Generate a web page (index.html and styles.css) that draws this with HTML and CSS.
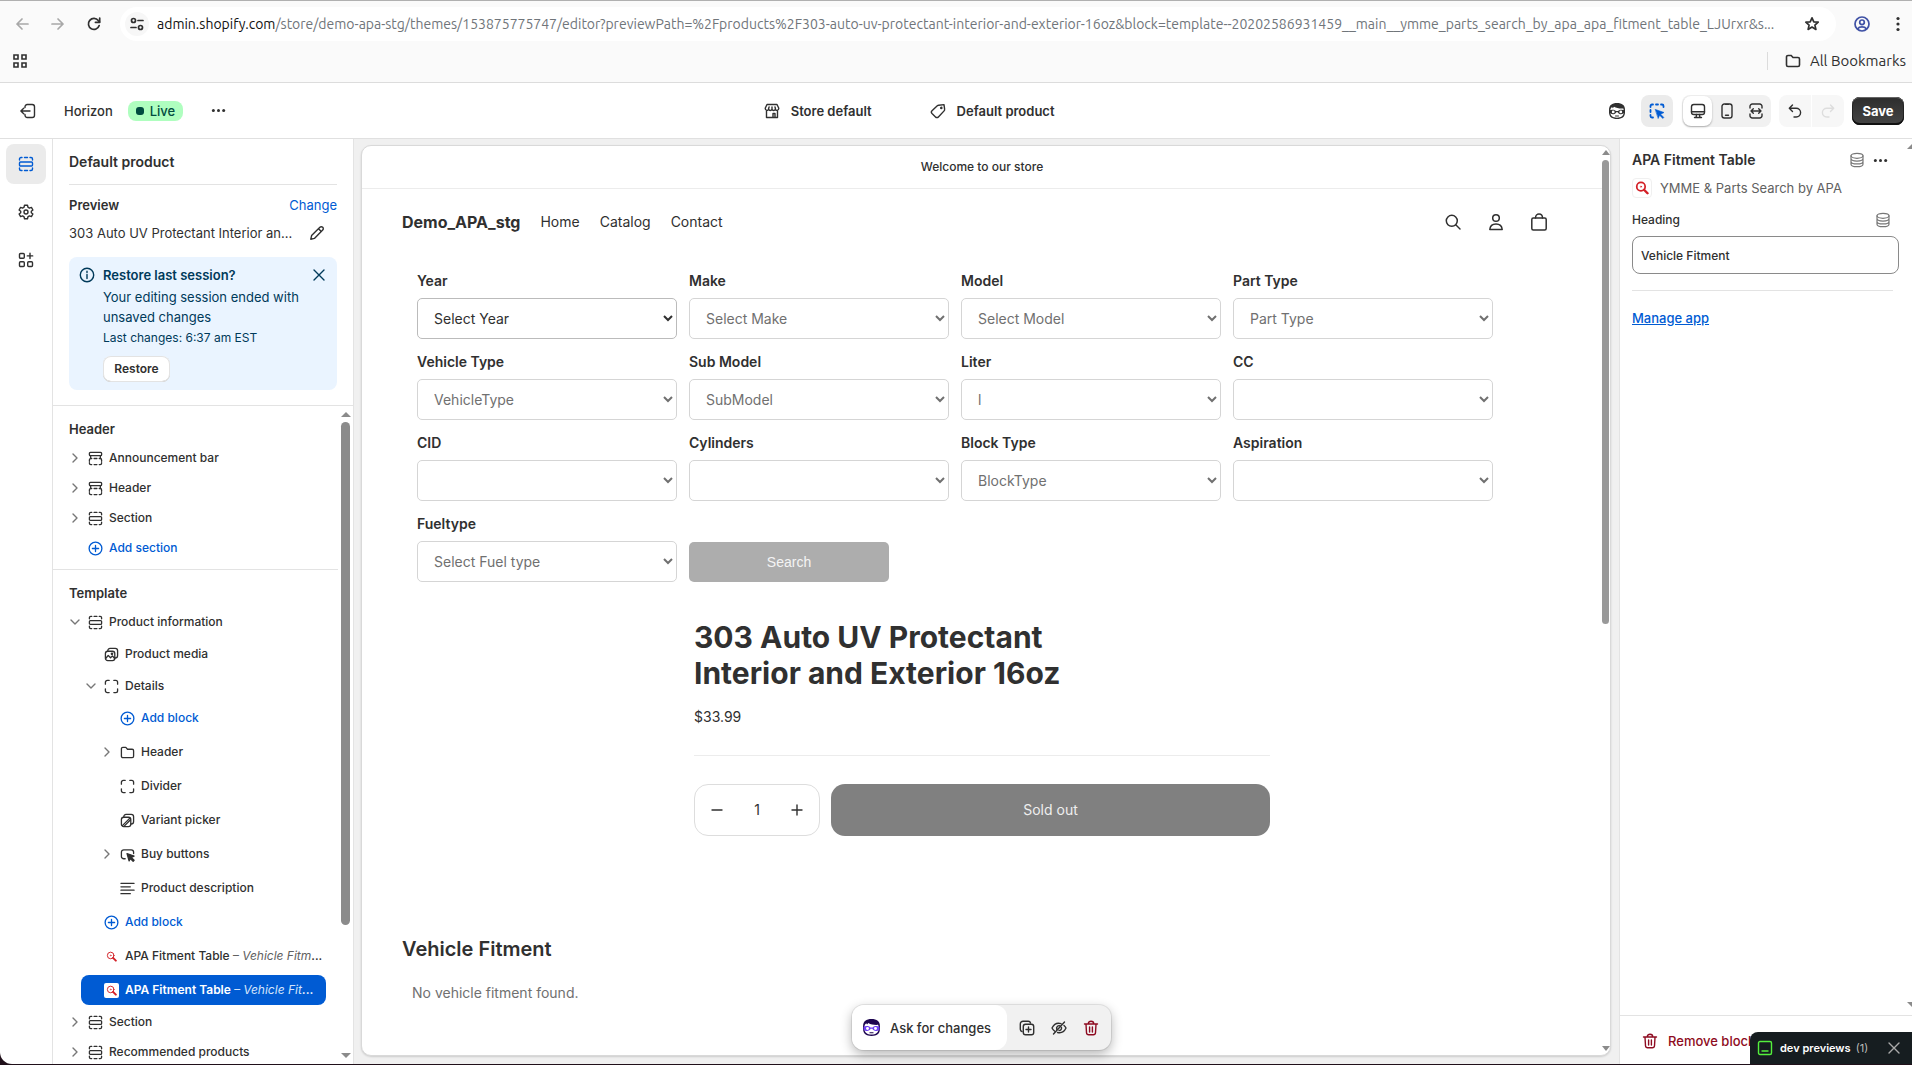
FILE: index.html
```html
<!DOCTYPE html>
<html lang="en">
<head>
    <meta charset="UTF-8">
    <meta name="viewport" content="width=device-width, initial-scale=1">
    <title>Horizon - Default product</title>
    <link rel="stylesheet" href="styles.css">
</head>
<body>
<svg class="sprite" xmlns="http://www.w3.org/2000/svg">
    <symbol id="i-back" viewBox="0 0 16 16"><path d="M14 8H3M8 3L3 8l5 5"/></symbol>
    <symbol id="i-forward" viewBox="0 0 16 16"><path d="M2 8h11M8 3l5 5-5 5"/></symbol>
    <symbol id="i-reload" viewBox="0 0 16 16"><path d="M13.200 9.500A5.500 5.500 0 1 1 12.300 4.600L13.500 6"/><path d="M13.700 2v4.300H9.400"/></symbol>
    <symbol id="i-tune" viewBox="0 0 16 16"><circle cx="4.500" cy="4.500" r="2"/><path d="M9 4.500h5M2 11.500h5"/><circle cx="11.500" cy="11.500" r="2"/></symbol>
    <symbol id="i-star" viewBox="0 0 16 16"><path d="M8 1.800l1.800 4 4.400.4-3.300 2.900 1 4.300L8 11.100l-3.900 2.300 1-4.300L1.800 6.200l4.400-.4z"/></symbol>
    <symbol id="i-user" viewBox="0 0 16 16"><circle cx="8" cy="8" r="7"/><circle cx="8" cy="6.300" r="2.300"/><path d="M3.800 12.800c1.500-2.500 6.900-2.500 8.400 0"/></symbol>
    <symbol id="i-apps" viewBox="0 0 16 16"><path d="M2 2h4v4H2zM10 2h4v4h-4zM2 10h4v4H2zM10 10h4v4h-4z"/></symbol>
    <symbol id="i-folder" viewBox="0 0 16 16"><path d="M1.500 4a1.500 1.500 0 0 1 1.500-1.500h3.200L8 4.500h5A1.500 1.500 0 0 1 14.500 6v6a1.500 1.500 0 0 1-1.500 1.500H3A1.500 1.500 0 0 1 1.500 12z"/></symbol>
    <symbol id="i-exit" viewBox="0 0 16 16"><path d="M5 4.500V3.700a2.200 2.200 0 0 1 2.200-2.200h5a2.300 2.300 0 0 1 2.300 2.300v8.400a2.300 2.300 0 0 1-2.300 2.300h-5A2.200 2.200 0 0 1 5 12.300v-.8M10 8H1M3.700 5.200L.9 8l2.800 2.800"/></symbol>
    <symbol id="i-dots" viewBox="0 0 16 16"><g fill="currentColor" stroke="none"><circle cx="2.500" cy="8" r="1.600"/><circle cx="8" cy="8" r="1.600"/><circle cx="13.500" cy="8" r="1.600"/></g></symbol>
    <symbol id="i-store" viewBox="0 0 16 16"><path d="M3 1.500h10l1.800 3.800c0 2.700-3.400 2.700-3.400.4 0 2.300-3.400 2.300-3.400 0 0 2.300-3.400 2.300-3.400 0 0 2.300-3.400 2.300-3.400-.4zM2.500 8v6.500h11V8M9 14.500v-4h2v4M4.600 5.500l.5-1.500M8 5.500V4M11.400 5.500L11 4"/></symbol>
    <symbol id="i-tag" viewBox="0 0 16 16"><path d="M8.700 2.200L14 1.600l.6 4.600a2 2 0 0 1-.5 1.700l-5.700 6a2 2 0 0 1-2.900 0L2 10.500a2 2 0 0 1 0-2.800l5.300-5a2 2 0 0 1 1.400-.5z"/><circle cx="11.300" cy="4.900" r=".6"/></symbol>
    <symbol id="i-section" viewBox="0 0 16 16"><path d="M1.500 4V3A1.500 1.500 0 0 1 3 1.500h1M6.500 1.500h3M12 1.500h1A1.500 1.500 0 0 1 14.500 3v1M1.500 12v1A1.500 1.500 0 0 0 3 14.500h1M6.500 14.500h3M12 14.500h1a1.500 1.500 0 0 0 1.500-1.500v-1"/><rect x="1.500" y="6" width="13" height="4" rx="1"/></symbol>
    <symbol id="i-header" viewBox="0 0 16 16"><rect x="1.500" y="1.500" width="13" height="3.500" rx="1"/><path d="M2.800 5v2M13.200 5v2M1.500 11V9.500A1.500 1.500 0 0 1 3 8h1M6.500 8h3M12 8h1a1.500 1.500 0 0 1 1.500 1.500V11M1.500 12.500V13A1.500 1.500 0 0 0 3 14.500h1M6.500 14.500h3M12 14.500h1a1.500 1.500 0 0 0 1.500-1.500v-.5"/></symbol>
    <symbol id="i-gear" viewBox="0 0 16 16"><path d="M6.500 1.200h3l.4 2 1.500.9 2-.7 1.500 2.600-1.600 1.300v1.400l1.600 1.300-1.500 2.600-2-.7-1.500.9-.4 2h-3l-.4-2-1.500-.9-2 .7L1.100 10l1.600-1.300V7.300L1.100 6l1.500-2.600 2 .7 1.500-.9z"/><circle cx="8" cy="8" r="2"/></symbol>
    <symbol id="i-addapp" viewBox="0 0 16 16"><rect x="1.500" y="1.500" width="4.800" height="4.800" rx="1"/><rect x="1.500" y="9.700" width="4.800" height="4.800" rx="1"/><rect x="9.700" y="9.700" width="4.800" height="4.800" rx="1"/><path d="M12 1.200v5.400M9.300 3.900h5.400"/></symbol>
    <symbol id="i-pencil" viewBox="0 0 16 16"><path d="M1.800 14.200l.8-3.600 8.300-8.300a1.900 1.900 0 0 1 2.800 2.800l-8.300 8.300zM9.500 3.700l2.800 2.800"/></symbol>
    <symbol id="i-info" viewBox="0 0 16 16"><circle cx="8" cy="8" r="6.700"/><path d="M8 7.500v4M8 4.300v1.300"/></symbol>
    <symbol id="i-close" viewBox="0 0 16 16"><path d="M3 3l10 10M13 3L3 13"/></symbol>
    <symbol id="i-right" viewBox="0 0 16 16"><path d="M6 4l4 4-4 4"/></symbol>
    <symbol id="i-down" viewBox="0 0 16 16"><path d="M4 6l4 4 4-4"/></symbol>
    <symbol id="i-add" viewBox="0 0 16 16"><circle cx="8" cy="8" r="6.800"/><path d="M8 4.700v6.600M4.700 8h6.600"/></symbol>
    <symbol id="i-media" viewBox="0 0 16 16"><rect x="1.500" y="4.500" width="10" height="10" rx="2.500"/><path d="M4 4.300C4 2.500 5 1.500 6.500 1.500h5.500a2.500 2.500 0 0 1 2.500 2.500v5c0 1.700-1 2.700-2.800 2.700M2 12l2.500-3 2.500 2.500 2-2 2.500 3"/><circle cx="8.500" cy="7.300" r=".7"/></symbol>
    <symbol id="i-block" viewBox="0 0 16 16"><path d="M1.500 5.500v-2a2 2 0 0 1 2-2h2M10.500 1.500h2a2 2 0 0 1 2 2v2M14.500 10.500v2a2 2 0 0 1-2 2h-2M5.500 14.500h-2a2 2 0 0 1-2-2v-2"/></symbol>
    <symbol id="i-variant" viewBox="0 0 16 16"><rect x="1.500" y="4.500" width="10" height="10" rx="2.500"/><path d="M4 4.300C4 2.500 5 1.500 6.500 1.500h5.500a2.500 2.500 0 0 1 2.500 2.500v5c0 1.700-1 2.700-2.800 2.700M2.500 13.500l8-8M4.500 14l6.500-6.500"/></symbol>
    <symbol id="i-button" viewBox="0 0 16 16"><path d="M5.500 12.500H4A2.500 2.500 0 0 1 1.500 10V5.500A2.500 2.500 0 0 1 4 3h8a2.500 2.500 0 0 1 2.500 2.500V7"/><path fill="currentColor" d="M7.500 7l7.500 2.700-3 1.500 3 3-1 1-3-3-1.300 2.600z"/></symbol>
    <symbol id="i-text" viewBox="0 0 16 16"><path d="M1 2.500h14M1 6.200h10M1 9.800h14M1 13.500h10"/></symbol>
    <symbol id="i-apa" viewBox="0 0 16 16"><circle cx="6.800" cy="6.500" r="4.800"/><path d="M10.300 10l4 4" stroke-width="2.800"/><circle cx="6.800" cy="6.500" r=".7" stroke-width=".8"/></symbol>
    <symbol id="i-sidekick" viewBox="0 0 18 18"><path fill="currentColor" stroke="none" d="M1 8C1 3 4 1 9 1s8 2 8 7v2c0 5-3 7-8 7s-8-2-8-7z"/><path fill="#fff" stroke="none" d="M2.300 8.500c0-1.500.7-2.700 1.700-3.500l.8 1.200L6 4.800c2.500 1.600 6 1.900 9.300 1.700.4 1 .4 2 .4 3.500 0 4-2.500 5.700-6.700 5.700S2.300 14 2.300 10z"/><path class="mask" stroke="none" d="M1.500 8.200c2-.8 5-.8 6.500.8h2c1.500-1.600 4.500-1.600 6.500-.8v2.600c-2 2-5.500 2-6.700-.6H8.200c-1.200 2.600-4.700 2.600-6.700.6z"/><circle cx="5.200" cy="9.900" r="1.400" fill="#fff" stroke="none"/><circle cx="12.800" cy="9.900" r="1.400" fill="#fff" stroke="none"/><path d="M7.500 14h3" stroke-width="1"/></symbol>
    <symbol id="i-inspect" viewBox="0 0 16 16"><path d="M1.500 4V3A1.500 1.500 0 0 1 3 1.500h1M7 1.500h2M12 1.500h1A1.500 1.500 0 0 1 14.500 3v1M1.500 7v2M1.500 12v1A1.500 1.500 0 0 0 3 14.500h1" stroke-width="1.800"/><path fill="currentColor" d="M6.500 6.500l8.500 3-3.400 1.700 3.200 3.200-1 1-3.200-3.200-1.300 3z" stroke-width=".6"/></symbol>
    <symbol id="i-desktop" viewBox="0 0 16 16"><rect x="1.500" y="1.500" width="13" height="10" rx="2.300"/><path d="M1.500 8.700h13M6.500 11.500l-.4 3M9.500 11.500l.4 3M4.500 14.500h7"/></symbol>
    <symbol id="i-mobile" viewBox="0 0 16 16"><rect x="3" y="1" width="10" height="14" rx="2.300"/><path d="M6.500 12.300h3M6.700 1.400h2.600"/></symbol>
    <symbol id="i-full" viewBox="0 0 16 16"><path d="M2 5V3.300A2.300 2.300 0 0 1 4.300 1h7.400A2.300 2.300 0 0 1 14 3.300V5M2 11v1.700A2.300 2.300 0 0 0 4.300 15h7.400a2.300 2.300 0 0 0 2.300-2.300V11M3 8h10M5.300 5.700L3 8l2.300 2.300M10.700 5.700L13 8l-2.300 2.300"/></symbol>
    <symbol id="i-undo" viewBox="0 0 16 16"><path d="M5.500 2L2.300 5.200l3.200 3.200M2.500 5.200h6.700a4.400 4.400 0 0 1 0 8.800H7"/></symbol>
    <symbol id="i-redo" viewBox="0 0 16 16"><path d="M10.500 2l3.200 3.200-3.200 3.200M13.500 5.200H6.800a4.400 4.400 0 0 0 0 8.800H9"/></symbol>
    <symbol id="i-search" viewBox="0 0 18 18"><circle cx="7.800" cy="7.800" r="5.500"/><path d="M12 12l4 4"/></symbol>
    <symbol id="i-account" viewBox="0 0 18 18"><circle cx="9" cy="5" r="3.300"/><path d="M2.800 16.500c.3-3.700 2.500-5.500 6.200-5.500s5.900 1.800 6.200 5.500z"/></symbol>
    <symbol id="i-bag" viewBox="0 0 18 18"><rect x="1.800" y="5" width="14.400" height="12" rx="1.500"/><path d="M5.500 5c0-5.300 7-5.300 7 0"/></symbol>
    <symbol id="i-minus" viewBox="0 0 16 16"><path d="M3 8h10"/></symbol>
    <symbol id="i-plus" viewBox="0 0 16 16"><path d="M3 8h10M8 3v10"/></symbol>
    <symbol id="i-copy" viewBox="0 0 16 16"><rect x="4.300" y="4.300" width="10.400" height="10.400" rx="2.200"/><path d="M3 11.500c-1.200-.3-1.700-1-1.700-2.200V4a2.700 2.700 0 0 1 2.700-2.700h5.300c1.200 0 1.900.5 2.200 1.700M9.500 7v5M7 9.500h5"/></symbol>
    <symbol id="i-hide" viewBox="0 0 16 16"><path d="M10 3.600C5.500 2.300 2.500 5 1 8c.6 1.200 1.400 2.200 2.500 3M13 5.500c.9.800 1.500 1.600 2 2.500-1.600 3.300-4.700 5.500-8.500 4.500M13.500 2l-11 12M5.700 9.200C5 7 7 5.200 9 5.800M10.500 7.500c.3 2-1 3-2.500 3"/></symbol>
    <symbol id="i-trash" viewBox="0 0 16 16"><path d="M1.500 4h13M5.300 3.800c0-3.500 5.400-3.500 5.400 0M3 4.200l.5 8.500a2.200 2.200 0 0 0 2.200 2h4.600a2.200 2.200 0 0 0 2.200-2L13 4.200M6.600 7v5M9.400 7v5"/></symbol>
    <symbol id="i-db" viewBox="0 0 16 16"><ellipse cx="8" cy="3.800" rx="6" ry="2.500"/><path d="M2 3.800v8.400c0 3.300 12 3.300 12 0V3.800M2 6.600c0 3.300 12 3.300 12 0M2 9.400c0 3.300 12 3.300 12 0"/></symbol>
    <symbol id="i-preview" viewBox="0 0 16 16"><rect x="1.500" y="1.500" width="13" height="13" rx="1.500"/><path d="M5 11h6"/></symbol>
</svg>

<div class="browser">
    <div class="toolbar">
        <button class="nav-btn faded" aria-label="Back"><svg><use href="#i-back"/></svg></button>
        <button class="nav-btn faded" aria-label="Forward"><svg><use href="#i-forward"/></svg></button>
        <button class="nav-btn" aria-label="Reload"><svg><use href="#i-reload"/></svg></button>
        <div class="address">
            <button class="tune" aria-label="Site information"><svg><use href="#i-tune"/></svg></button>
            <div class="url"><span>admin.shopify.com</span>/store/demo-apa-stg/themes/153875775747/editor?previewPath=%2Fproducts%2F303-auto-uv-protectant-interior-and-exterior-16oz&amp;block=template--20202586931459__main__ymme_parts_search_by_apa_apa_fitment_table_LJUrxr&amp;s...</div>
            <button class="star" aria-label="Bookmark"><svg><use href="#i-star"/></svg></button>
        </div>
        <button class="profile" aria-label="Profile"><svg><use href="#i-user"/></svg></button>
        <button class="kebab" aria-label="Menu"><svg><use href="#i-dots"/></svg></button>
    </div>
    <div class="bookmarks">
        <button aria-label="Apps"><svg><use href="#i-apps"/></svg></button>
        <button class="all"><svg><use href="#i-folder"/></svg>All Bookmarks</button>
    </div>
</div>

<header class="topbar">
    <div class="top-left">
        <button aria-label="Exit"><svg><use href="#i-exit"/></svg></button>
        <span class="theme">Horizon</span>
        <span class="badge"><i></i>Live</span>
        <button aria-label="More"><svg class="small"><use href="#i-dots"/></svg></button>
    </div>
    <div class="top-mid">
        <button><svg><use href="#i-store"/></svg>Store default</button>
        <button><svg><use href="#i-tag"/></svg>Default product</button>
    </div>
    <div class="top-right">
        <button class="sidekick" aria-label="Sidekick"><svg><use href="#i-sidekick"/></svg></button>
        <button class="inspect" aria-label="Inspector"><svg><use href="#i-inspect"/></svg></button>
        <div class="views">
            <button class="on" aria-label="Desktop"><svg><use href="#i-desktop"/></svg></button>
            <button aria-label="Mobile"><svg><use href="#i-mobile"/></svg></button>
            <button aria-label="Full width"><svg><use href="#i-full"/></svg></button>
        </div>
        <div class="history">
            <button aria-label="Undo"><svg><use href="#i-undo"/></svg></button>
            <button class="off" aria-label="Redo"><svg><use href="#i-redo"/></svg></button>
        </div>
        <button class="save">Save</button>
    </div>
</header>

<div class="editor">
    <nav class="rail">
        <button class="on" aria-label="Sections"><svg><use href="#i-section"/></svg></button>
        <button aria-label="Theme settings"><svg><use href="#i-gear"/></svg></button>
        <button aria-label="Apps"><svg><use href="#i-addapp"/></svg></button>
    </nav>

    <aside class="sidebar">
        <div class="side-top">
            <h1>Default product</h1>
            <div class="preview-head"><b>Preview</b><button>Change</button></div>
            <div class="preview-name"><span>303 Auto UV Protectant Interior an...</span><button aria-label="Edit"><svg><use href="#i-pencil"/></svg></button></div>
            <div class="banner">
                <svg><use href="#i-info"/></svg>
                <div class="banner-text">
                    <b>Restore last session?</b>
                    <p>Your editing session ended with unsaved changes</p>
                    <p class="last">Last changes: 6:37 am EST</p>
                    <button class="restore">Restore</button>
                </div>
                <button class="dismiss" aria-label="Dismiss"><svg><use href="#i-close"/></svg></button>
            </div>
        </div>
        <div class="tree-wrap">
            <div class="tree">
                <section>
                    <h2>Header</h2>
                    <ul>
                        <li class="row"><svg class="arrow"><use href="#i-right"/></svg><svg><use href="#i-header"/></svg>Announcement bar</li>
                        <li class="row"><svg class="arrow"><use href="#i-right"/></svg><svg><use href="#i-header"/></svg>Header</li>
                        <li class="row"><svg class="arrow"><use href="#i-right"/></svg><svg><use href="#i-section"/></svg>Section</li>
                        <li><button class="row add"><svg><use href="#i-add"/></svg>Add section</button></li>
                    </ul>
                </section>
                <section>
                    <h2>Template</h2>
                    <ul>
                        <li class="row"><svg class="arrow"><use href="#i-down"/></svg><svg><use href="#i-section"/></svg>Product information</li>
                        <li>
                            <ul class="level1">
                                <li class="row leaf"><svg><use href="#i-media"/></svg>Product media</li>
                                <li class="row"><svg class="arrow"><use href="#i-down"/></svg><svg><use href="#i-block"/></svg>Details</li>
                                <li>
                                    <ul class="level2">
                                        <li><button class="row add"><svg><use href="#i-add"/></svg>Add block</button></li>
                                        <li class="row"><svg class="arrow"><use href="#i-right"/></svg><svg><use href="#i-folder"/></svg>Header</li>
                                        <li class="row leaf"><svg><use href="#i-block"/></svg>Divider</li>
                                        <li class="row leaf"><svg><use href="#i-variant"/></svg>Variant picker</li>
                                        <li class="row"><svg class="arrow"><use href="#i-right"/></svg><svg><use href="#i-button"/></svg>Buy buttons</li>
                                        <li class="row leaf"><svg><use href="#i-text"/></svg>Product description</li>
                                    </ul>
                                </li>
                            </ul>
                            <ul class="level1 apps">
                                <li><button class="row add"><svg><use href="#i-add"/></svg>Add block</button></li>
                                <li class="row leaf"><svg class="apa"><use href="#i-apa"/></svg><span class="name">APA Fitment Table <em>– Vehicle Fitm</em>...</span></li>
                                <li class="row leaf selected"><svg class="apa"><use href="#i-apa"/></svg><span class="name">APA Fitment Table <em>– Vehicle Fit</em>...</span></li>
                            </ul>
                        </li>
                        <li class="row"><svg class="arrow"><use href="#i-right"/></svg><svg><use href="#i-section"/></svg>Section</li>
                        <li class="row"><svg class="arrow"><use href="#i-right"/></svg><svg><use href="#i-section"/></svg>Recommended products</li>
                    </ul>
                </section>
            </div>
            <div class="scrollbar"><i class="up"></i><i class="thumb"></i><i class="rest"></i><i class="dn"></i></div>
        </div>
    </aside>

    <main class="canvas">
        <div class="frame">
            <div class="store">
                <div class="announce">Welcome to our store</div>
                <div class="store-head">
                    <a class="logo" href="#">Demo_APA_stg</a>
                    <nav><a href="#">Home</a><a href="#">Catalog</a><a href="#">Contact</a></nav>
                    <div class="store-icons">
                        <button aria-label="Search"><svg><use href="#i-search"/></svg></button>
                        <button aria-label="Account"><svg><use href="#i-account"/></svg></button>
                        <button aria-label="Cart"><svg><use href="#i-bag"/></svg></button>
                    </div>
                </div>
                <form class="fitment">
                    <div><label for="year">Year</label><select id="year"><option>Select Year</option></select></div>
                    <div><label for="make">Make</label><select id="make" disabled><option>Select Make</option></select></div>
                    <div><label for="model">Model</label><select id="model" disabled><option>Select Model</option></select></div>
                    <div><label for="part">Part Type</label><select id="part" disabled><option>Part Type</option></select></div>
                    <div><label for="vehicle">Vehicle Type</label><select id="vehicle" disabled><option>VehicleType</option></select></div>
                    <div><label for="sub">Sub Model</label><select id="sub" disabled><option>SubModel</option></select></div>
                    <div><label for="liter">Liter</label><select id="liter" disabled><option>l</option></select></div>
                    <div><label for="cc">CC</label><select id="cc" disabled><option></option></select></div>
                    <div><label for="cid">CID</label><select id="cid" disabled><option></option></select></div>
                    <div><label for="cyl">Cylinders</label><select id="cyl" disabled><option></option></select></div>
                    <div><label for="block">Block Type</label><select id="block" disabled><option>BlockType</option></select></div>
                    <div><label for="asp">Aspiration</label><select id="asp" disabled><option></option></select></div>
                    <div><label for="fuel">Fueltype</label><select id="fuel" disabled><option>Select Fuel type</option></select></div>
                    <button class="search" type="button">Search</button>
                </form>
                <div class="product">
                    <h2>303 Auto UV Protectant Interior and Exterior 16oz</h2>
                    <p class="price">$33.99</p>
                    <div class="buy">
                        <div class="qty">
                            <button aria-label="Decrease"><svg><use href="#i-minus"/></svg></button>
                            <input type="text" value="1" aria-label="Quantity">
                            <button aria-label="Increase"><svg><use href="#i-plus"/></svg></button>
                        </div>
                        <button class="soldout" disabled>Sold out</button>
                    </div>
                </div>
                <div class="table-block">
                    <h3>Vehicle Fitment</h3>
                    <p>No vehicle fitment found.</p>
                </div>
            </div>
            <div class="scrollbar"><i class="up"></i><i class="thumb"></i><i class="rest"></i><i class="dn"></i></div>
        </div>
        <div class="floating">
            <button class="ask"><svg><use href="#i-sidekick"/></svg>Ask for changes</button>
            <div class="tools">
                <button aria-label="Duplicate"><svg><use href="#i-copy"/></svg></button>
                <button aria-label="Hide"><svg><use href="#i-hide"/></svg></button>
                <button class="danger" aria-label="Remove"><svg><use href="#i-trash"/></svg></button>
            </div>
        </div>
    </main>

    <aside class="panel">
        <div class="panel-body">
            <div class="panel-title">
                <h2>APA Fitment Table</h2>
                <button class="db" aria-label="Metafields"><svg><use href="#i-db"/></svg></button>
                <button aria-label="More"><svg class="small"><use href="#i-dots"/></svg></button>
            </div>
            <div class="app-name"><span class="app-icon"><svg class="apa"><use href="#i-apa"/></svg></span>YMME &amp; Parts Search by APA</div>
            <div class="field-head"><label for="heading">Heading</label><button class="db" aria-label="Connect dynamic source"><svg><use href="#i-db"/></svg></button></div>
            <input id="heading" type="text" value="Vehicle Fitment">
            <hr>
            <a href="#">Manage app</a>
        </div>
        <i class="edge up"></i>
        <i class="edge dn"></i>
        <div class="panel-foot"><button class="danger"><svg><use href="#i-trash"/></svg>Remove block</button></div>
    </aside>
</div>

<div class="dev">
    <svg class="dev-logo"><use href="#i-preview"/></svg>
    <b>dev previews</b><span>(1)</span>
    <button aria-label="Close"><svg><use href="#i-close"/></svg></button>
</div>
</body>
</html>
```
FILE: styles.css
```css
* {box-sizing: border-box;}
html {height: 100%; padding-bottom: 1px; background: #20101a;}
body {
    margin: 0;
    height: 100%;
    display: flex;
    flex-direction: column;
    overflow: hidden;
    border-radius: 0 0 0 12px;
    background: #fff;
    color: #303030;
    font: 13px/20px Inter, "Liberation Sans", sans-serif;
}
h1, h2, h3, p, ul {margin: 0; padding: 0;}
ul {list-style: none;}
button {
    display: flex;
    align-items: center;
    justify-content: center;
    margin: 0;
    padding: 0;
    border: 0;
    background: none;
    color: inherit;
    font: inherit;
}
svg {
    flex: none;
    width: 16px;
    height: 16px;
    fill: none;
    stroke: currentColor;
    stroke-width: 1.4;
    stroke-linecap: round;
    stroke-linejoin: round;
}
.sprite {display: none;}
.mask {fill: var(--mask, #303030);}

/* browser */
.browser {
    flex: none;
    border-top: 1px solid #b0b0b0;
    border-bottom: 1px solid #dcdcdc;
    background: #fafafa;
    color: #303030;
    font-family: Ubuntu, "Noto Sans", sans-serif;
}
.toolbar {display: flex; align-items: center; height: 46px; padding: 0 6px 0 14px;}
.nav-btn {width: 16px; margin-right: 20px;}
.faded {color: #a8a8a8;}
.toolbar svg {stroke-width: 1.7;}
.address {
    display: flex;
    align-items: center;
    flex: 1;
    min-width: 0;
    height: 34px;
    margin-left: -2px;
    padding: 0 16px 0 5px;
    border-radius: 17px;
    background: #fff;
}
.tune {width: 24px; height: 24px; border-radius: 50%; background: #f7f7f7;}
.url {
    flex: 1;
    min-width: 0;
    margin: 0 12px 0 8px;
    overflow: hidden;
    color: #70757a;
    font-size: 14px;
    white-space: nowrap;
}
.url span {color: #111;}
.profile {margin: 0 20px 0 18px; color: #3f51a5;}
.kebab {width: 16px;}
.kebab svg {transform: rotate(90deg);}
.bookmarks {display: flex; justify-content: space-between; height: 35px; padding: 0 6px 7px 12px;}
.bookmarks svg {stroke-width: 1.6; stroke-linejoin: miter;}
.all {gap: 9px; font-size: 15px;}
.all::before {content: ""; width: 1px; height: 18px; margin-right: 8px; background: #dcdcdc;}

/* top bar */
.topbar {
    display: flex;
    align-items: center;
    justify-content: space-between;
    flex: none;
    height: 56px;
    padding: 0 8px 0 20px;
    border-bottom: 1px solid #e0e0e0;
    font-weight: 500;
}
.top-left, .top-mid, .top-right {display: flex; align-items: center;}
.theme {margin: 0 15px 0 28px;}
.badge {
    display: flex;
    align-items: center;
    gap: 6px;
    margin-right: 28px;
    padding: 0 8px;
    border-radius: 8px;
    background: #affebf;
    color: #014b40;
}
.badge i {width: 8px; height: 8px; border-radius: 3px; background: #014b40;}
svg.small {width: 15px; height: 15px;}
.top-mid {gap: 58px; padding-right: 16px; font-weight: 600;}
.top-mid button {gap: 11px;}
.sidekick {margin-right: 15px;}
.sidekick svg {width: 18px; height: 18px;}
.inspect {width: 32px; height: 32px; border-radius: 8px; background: #ebebeb; color: #005bd3;}
.views {display: flex; height: 32px; margin: 0 8px 0 9px; padding: 1px; border-radius: 8px; background: #f1f1f1;}
.views button {width: 29px; border-radius: 8px;}
.views .on {background: #fff; box-shadow: 0 1px 2px rgba(0, 0, 0, .3);}
.history {display: flex; gap: 1px; height: 32px; margin-right: 8px; border-radius: 8px; overflow: hidden;}
.history button {width: 32px; background: #f7f7f7;}
.history .off {color: #ddd;}
.save {
    width: 52px;
    height: 28px;
    border-radius: 8px;
    background: linear-gradient(#2d2d2d, #454545);
    box-shadow: inset 0 1px 0 #666, inset 0 -2px 0 #111, inset 0 0 0 1px #222;
    color: #fff;
    font-weight: 700;
}

/* editor */
.editor {display: flex; flex: 1; min-height: 0;}
.rail {
    display: flex;
    flex-direction: column;
    gap: 8px;
    flex: none;
    width: 53px;
    padding: 5px 6px;
    border-right: 1px solid #e3e3e3;
}
.rail button {width: 40px; height: 40px; border-radius: 8px;}
.rail .on {background: #ebebeb; color: #005bd3;}
.sidebar {
    display: flex;
    flex-direction: column;
    flex: none;
    width: 301px;
    border-right: 1px solid #e3e3e3;
}
.side-top {padding: 0 16px 15px; border-bottom: 1px solid #e3e3e3;}
h1 {height: 46px; border-bottom: 1px solid #e3e3e3; font-size: 14px; font-weight: 600; line-height: 46px;}
.preview-head {display: flex; justify-content: space-between; padding: 10px 0 8px;}
b {font-weight: 600;}
.preview-head button, .add {color: #005bd3;}
.preview-name {display: flex; justify-content: space-between; padding-right: 12px; margin-bottom: 14px;}
.banner {
    display: flex;
    gap: 8px;
    padding: 8px 10px;
    border-radius: 8px;
    background: #eaf4ff;
    color: #003a5a;
}
.banner > svg {margin-top: 2px;}
.banner-text {flex: 1;}
.banner-text p {padding-top: 2px; margin-right: -20px;}
.banner-text .last {padding-top: 1px; font-size: 12px;}
.dismiss {height: 20px;}
.restore {
    width: 67px;
    height: 26px;
    margin-top: 8px;
    border-radius: 8px;
    background: #fff;
    box-shadow: inset 0 0 0 1px #e3e3e3, inset 0 -1px 0 #b5b5b5;
    color: #303030;
    font-size: 12px;
    font-weight: 600;
}
.tree-wrap {display: flex; flex: 1; min-height: 0;}
.tree {flex: 1; min-width: 0; overflow: hidden;}
.tree section {padding: 12px 0 6px; border-bottom: 1px solid #e3e3e3;}
.tree h2 {padding: 1px 16px 4px; font-size: 13px; font-weight: 600;}
.row {display: flex; align-items: center; height: 30px; padding-left: 14px; font-size: 12px; font-weight: 500;}
.row svg {width: 15px; height: 15px; margin-right: 6px;}
.row .arrow {width: 16px; height: 16px; margin-right: 5px; color: #777;}
.row.leaf, .row.add {padding-left: 35px;}
.level1 {display: flex; flex-direction: column; gap: 2px; padding: 2px 0 0 16px;}
.level2 {display: flex; flex-direction: column; gap: 4px; padding-left: 16px;}
.level1.apps {gap: 4px; padding: 4px 12px 2px 16px;}
.name {overflow: hidden; white-space: nowrap;}
.name em {color: #616161; font-weight: 400;}
.apa {color: #d32027;}
.row .apa {padding: 2px;}
.selected {margin-left: 12px; border-radius: 8px; background: #005bd3; color: #fff; font-weight: 600;}
.row.selected {padding-left: 23px;}
.selected em {color: #d5e4fa;}
.selected .apa {border-radius: 2px; background: #fff;}

.scrollbar {display: flex; flex-direction: column; align-items: center; width: 12px; flex: none; margin-left: 3px; padding: 6px 3px 6px 0;}
.thumb {flex: 498; width: 9px; margin-top: 5px; border-radius: 5px; background: #8b8b8b;}
.rest {flex: 127;}
.up, .dn {width: 0; border: 5px solid transparent; border-top-width: 0; border-bottom: 5px solid #8b8b8b;}
.dn {border-bottom-width: 0; border-top: 5px solid #8b8b8b;}

/* preview */
.canvas {position: relative; flex: 1; min-width: 0; padding: 6px 8px 8px 7px; background: #f0f0f0;}
.frame {
    display: flex;
    height: 100%;
    border: 1px solid #d9d9d9;
    border-radius: 10px;
    background: #fff;
    box-shadow: 0 1px 2px rgba(0, 0, 0, .15);
    overflow: hidden;
}
.store {flex: 1; min-width: 0; font-size: 14px;}
.frame .scrollbar {width: 8px; margin: 0; padding: 4px 1px 4px 0;}
.frame .thumb {flex: 464; width: 7px; background: #999;}
.frame .rest {flex: 422;}
.frame .up, .frame .dn {border-left-width: 4px; border-right-width: 4px;}
.announce {height: 43px; border-bottom: 1px solid #ececec; font-size: 12px; font-weight: 500; line-height: 41px; text-align: center;}
.store a {color: inherit; text-decoration: none;}
.store-head {display: flex; align-items: center; height: 66px; padding: 0 54px 0 40px;}
.logo {font-size: 16px; font-weight: 700;}
.store-head nav {display: flex; gap: 20px; margin-left: 20px;}
.store-icons {display: flex; gap: 25px; margin-left: auto;}
.store-icons svg {width: 18px; height: 18px; stroke-width: 1.5;}
.fitment {
    display: grid;
    grid-template-columns: repeat(4, 1fr);
    gap: 13px 12px;
    align-items: end;
    padding: 16px 109px 0 55px;
}
label {display: block; font-weight: 600;}
.fitment label {margin-bottom: 7px;}
select {
    display: block;
    width: 100%;
    height: 41px;
    padding: 0 12px;
    border: 1px solid #bbb;
    border-radius: 5px;
    background: #fff;
    color: #303030;
    font: inherit;
}
select:disabled {border-color: #d5d5d5; color: #707070; opacity: 1;}
.search {width: 200px; height: 40px; border-radius: 5px; background: #adadad; color: #f4f4f4; font: 14px "Liberation Sans", sans-serif;}
.product {width: 576px; margin: 37px auto 0 332px;}
.product h2 {max-width: 400px; font-size: 30px; font-weight: 700; line-height: 36px;}
.price {padding: 16px 0 28px; border-bottom: 1px solid #ececec;}
.buy {display: flex; gap: 11px; margin-top: 28px; height: 52px;}
.qty {display: flex; width: 126px; padding: 0 2px; border: 1px solid #ddd; border-radius: 14px;}
.qty button {width: 40px;}
.qty input {flex: 1; min-width: 0; border: 0; padding: 0; background: none; color: inherit; font: inherit; text-align: center;}
.soldout {flex: 1; border-radius: 14px; background: #808080; color: #eee;}
.table-block {padding: 99px 40px 0;}
.table-block h3 {font-size: 20px; font-weight: 600; line-height: 28px;}
.table-block p {padding: 20px 10px 0; color: #707070;}

/* floating toolbar */
.floating {
    position: absolute;
    left: 0;
    right: 10px;
    bottom: 14px;
    display: flex;
    width: fit-content;
    height: 45px;
    margin: 0 auto;
    border-radius: 12px;
    background: #f1f1f1;
    box-shadow: 0 0 0 1px rgba(0, 0, 0, .08), 0 4px 12px rgba(0, 0, 0, .3);
}
.ask {gap: 9px; padding: 0 16px 0 10px; border-radius: 12px; background: #fff; font-weight: 500;}
.ask svg {--mask: #6f3ff5; width: 19px; height: 19px; color: #1d0550;}
.tools {display: flex; align-items: center; gap: 16px; padding: 0 12px;}
.danger {color: #8e0b21;}

/* right panel */
.panel {position: relative; display: flex; flex-direction: column; flex: none; width: 293px; border-left: 1px solid #e3e3e3;}
.panel-body {flex: 1; padding: 11px 13px 0 12px;}
.panel-title {display: flex; align-items: center; gap: 8px; padding-right: 11px;}
.panel-title h2 {flex: 1; font-size: 14px; font-weight: 600;}
.db {color: #777;}
.db svg {stroke-width: 1.2;}
.app-name {display: flex; align-items: center; gap: 8px; margin-top: 8px; color: #616161;}
.app-icon {display: flex; align-items: center; justify-content: center; width: 20px; height: 20px; border: 1px solid #f0f0f0; border-radius: 4px;}
.app-icon svg {width: 14px; height: 14px; stroke-width: 2;}
.field-head {display: flex; justify-content: space-between; margin: 12px 8px 6px 0; font-size: 12px;}
.field-head label {font-weight: 500;}
.panel input {
    display: block;
    width: 100%;
    height: 38px;
    padding: 0 8px;
    border: 1px solid #8a8a8a;
    border-radius: 8px;
    color: #303030;
    font: 500 12px Inter, sans-serif;
}
hr {height: 1px; margin: 16px 6px 17px 0; border: 0; background: #e3e3e3;}
.panel a {color: #005bd3; font-weight: 500;}
.edge {position: absolute; right: -5px;}
.edge.up {top: 5px;}
.edge.dn {bottom: 57px;}
.panel-foot {height: 49px; padding: 15px 22px; border-top: 1px solid #e3e3e3; font-weight: 500;}
.panel-foot button {gap: 10px;}

/* dev previews */
.dev {
    position: absolute;
    right: 0;
    bottom: 1px;
    display: flex;
    align-items: center;
    width: 162px;
    height: 32px;
    padding: 0 10px 0 7px;
    border-radius: 8px 0 0 0;
    background: #161d20;
    color: #fff;
    font-size: 11px;
}
.dev-logo {margin-right: 7px; color: #54f03c;}
.dev span {margin-left: 5px; color: #bbb;}
.dev button {margin-left: auto; color: #aaa;}
```
